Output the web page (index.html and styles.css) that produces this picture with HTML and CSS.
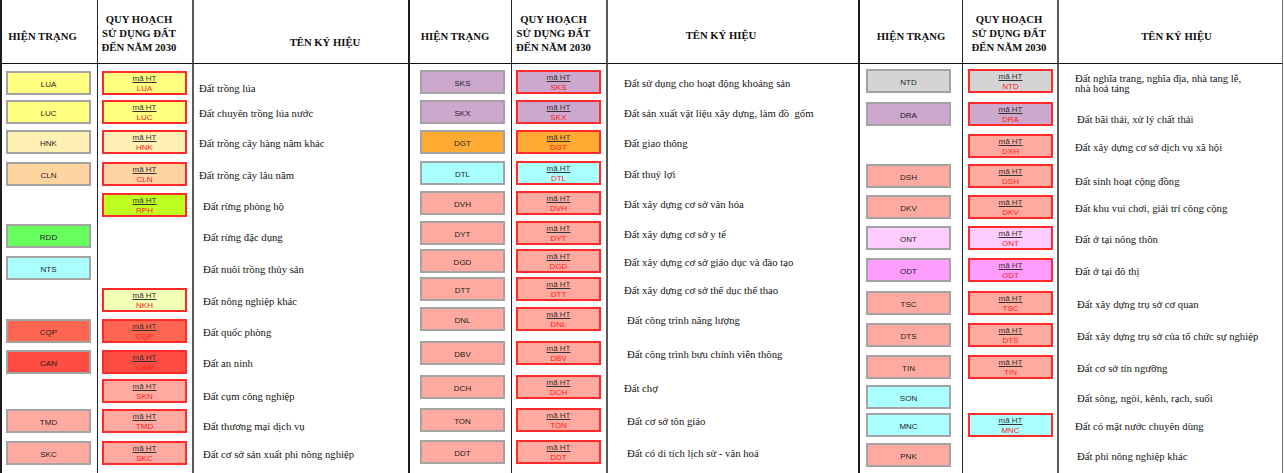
FILE: index.html
```html
<!DOCTYPE html>
<html lang="vi">
<head>
<meta charset="utf-8">
<title>Bảng ký hiệu quy hoạch sử dụng đất</title>
<link rel="stylesheet" href="styles.css">
</head>
<body>
<div class="sheet">

  <section class="group g1">
    <div class="cell ht head h-ht">HIỆN TRẠNG</div>
    <div class="cell qh head h-qh">QUY HOẠCH<br>SỬ DỤNG ĐẤT<br>ĐẾN NĂM 2030</div>
    <div class="cell nm head h-nm">TÊN KÝ HIỆU</div>

    <div class="cell ht"><div class="chip c-lua">LUA</div></div>
    <div class="cell qh"><div class="chip red c-lua"><u>mã HT</u><span>LUA</span></div></div>
    <div class="cell nm"><p class="low">Đất trồng lúa</p></div>

    <div class="cell ht"><div class="chip c-lua">LUC</div></div>
    <div class="cell qh"><div class="chip red c-lua"><u>mã HT</u><span>LUC</span></div></div>
    <div class="cell nm"><p>Đất chuyên trồng lúa nước</p></div>

    <div class="cell ht"><div class="chip c-hnk">HNK</div></div>
    <div class="cell qh"><div class="chip red c-hnk"><u>mã HT</u><span>HNK</span></div></div>
    <div class="cell nm"><p>Đất trồng cây hàng năm khác</p></div>

    <div class="cell ht"><div class="chip c-cln">CLN</div></div>
    <div class="cell qh"><div class="chip red c-cln"><u>mã HT</u><span>CLN</span></div></div>
    <div class="cell nm"><p>Đất trồng cây lâu năm</p></div>

    <div class="cell ht"></div>
    <div class="cell qh"><div class="chip red c-rph"><u>mã HT</u><span>RPH</span></div></div>
    <div class="cell nm"><p class="in">Đất rừng phòng hộ</p></div>

    <div class="cell ht"><div class="chip c-rdd">RDD</div></div>
    <div class="cell qh"></div>
    <div class="cell nm"><p class="in">Đất rừng đặc dụng</p></div>

    <div class="cell ht"><div class="chip c-cyan">NTS</div></div>
    <div class="cell qh"></div>
    <div class="cell nm"><p class="in">Đất nuôi trồng thủy sản</p></div>

    <div class="cell ht"></div>
    <div class="cell qh"><div class="chip red c-nkh"><u>mã HT</u><span>NKH</span></div></div>
    <div class="cell nm"><p class="in">Đất nông nghiệp khác</p></div>

    <div class="cell ht"><div class="chip c-cqp">CQP</div></div>
    <div class="cell qh"><div class="chip red c-cqp"><u>mã HT</u><span>CQP</span></div></div>
    <div class="cell nm"><p class="in">Đất quốc phòng</p></div>

    <div class="cell ht"><div class="chip c-can">CAN</div></div>
    <div class="cell qh"><div class="chip red c-can"><u>mã HT</u><span>CAN</span></div></div>
    <div class="cell nm"><p class="in">Đất an ninh</p></div>

    <div class="cell ht"></div>
    <div class="cell qh"><div class="chip red c-sal"><u>mã HT</u><span>SKN</span></div></div>
    <div class="cell nm"><p class="in low">Đất cụm công nghiệp</p></div>

    <div class="cell ht"><div class="chip c-sal">TMD</div></div>
    <div class="cell qh"><div class="chip red c-sal"><u>mã HT</u><span>TMD</span></div></div>
    <div class="cell nm"><p class="in low">Đất thương mại dịch vụ</p></div>

    <div class="cell ht"><div class="chip c-sal">SKC</div></div>
    <div class="cell qh"><div class="chip red c-sal"><u>mã HT</u><span>SKC</span></div></div>
    <div class="cell nm"><p class="in">Đất cơ sở sản xuất phi nông nghiệp</p></div>

    <div class="cell ht"></div><div class="cell qh"></div><div class="cell nm"></div>
  </section>

  <section class="group g2">
    <div class="cell ht head h-ht">HIỆN TRẠNG</div>
    <div class="cell qh head h-qh">QUY HOẠCH<br>SỬ DỤNG ĐẤT<br>ĐẾN NĂM 2030</div>
    <div class="cell nm head h-nm">TÊN KÝ HIỆU</div>

    <div class="cell ht"><div class="chip c-lil">SKS</div></div>
    <div class="cell qh"><div class="chip red c-lil"><u>mã HT</u><span>SKS</span></div></div>
    <div class="cell nm"><p>Đất sử dụng cho hoạt động khoáng sản</p></div>

    <div class="cell ht"><div class="chip c-lil">SKX</div></div>
    <div class="cell qh"><div class="chip red c-lil"><u>mã HT</u><span>SKX</span></div></div>
    <div class="cell nm"><p>Đất sản xuất vật liệu xây dựng, làm đồ&nbsp; gốm</p></div>

    <div class="cell ht"><div class="chip c-dgt">DGT</div></div>
    <div class="cell qh"><div class="chip red c-dgt"><u>mã HT</u><span>DGT</span></div></div>
    <div class="cell nm"><p>Đất giao thông</p></div>

    <div class="cell ht"><div class="chip c-cyan">DTL</div></div>
    <div class="cell qh"><div class="chip red c-cyan"><u>mã HT</u><span>DTL</span></div></div>
    <div class="cell nm"><p>Đất thuỷ lợi</p></div>

    <div class="cell ht"><div class="chip c-sal">DVH</div></div>
    <div class="cell qh"><div class="chip red c-sal"><u>mã HT</u><span>DVH</span></div></div>
    <div class="cell nm"><p>Đất xây dựng cơ sở văn hóa</p></div>

    <div class="cell ht"><div class="chip c-sal">DYT</div></div>
    <div class="cell qh"><div class="chip red c-sal"><u>mã HT</u><span>DYT</span></div></div>
    <div class="cell nm"><p>Đất xây dựng cơ sở y tế</p></div>

    <div class="cell ht"><div class="chip c-sal">DGD</div></div>
    <div class="cell qh"><div class="chip red c-sal"><u>mã HT</u><span>DGD</span></div></div>
    <div class="cell nm"><p>Đất xây dựng cơ sở giáo dục và đào tạo</p></div>

    <div class="cell ht"><div class="chip c-sal">DTT</div></div>
    <div class="cell qh"><div class="chip red c-sal"><u>mã HT</u><span>DTT</span></div></div>
    <div class="cell nm"><p>Đất xây dựng cơ sở thể dục thể thao</p></div>

    <div class="cell ht"><div class="chip c-sal">DNL</div></div>
    <div class="cell qh"><div class="chip red c-sal"><u>mã HT</u><span>DNL</span></div></div>
    <div class="cell nm"><p class="in">Đất công trình năng lượng</p></div>

    <div class="cell ht"><div class="chip c-sal">DBV</div></div>
    <div class="cell qh"><div class="chip red c-sal"><u>mã HT</u><span>DBV</span></div></div>
    <div class="cell nm"><p class="in">Đất công trình bưu chính viễn thông</p></div>

    <div class="cell ht"><div class="chip c-sal">DCH</div></div>
    <div class="cell qh"><div class="chip red c-sal"><u>mã HT</u><span>DCH</span></div></div>
    <div class="cell nm"><p>Đất chợ</p></div>

    <div class="cell ht"><div class="chip c-sal">TON</div></div>
    <div class="cell qh"><div class="chip red c-sal"><u>mã HT</u><span>TON</span></div></div>
    <div class="cell nm"><p class="in">Đất cơ sở tôn giáo</p></div>

    <div class="cell ht"><div class="chip c-sal">DDT</div></div>
    <div class="cell qh"><div class="chip red c-sal"><u>mã HT</u><span>DDT</span></div></div>
    <div class="cell nm"><p class="in">Đất có di tích lịch sử - văn hoá</p></div>

    <div class="cell ht"></div><div class="cell qh"></div><div class="cell nm"></div>
  </section>

  <section class="group g3">
    <div class="cell ht head h-ht">HIỆN TRẠNG</div>
    <div class="cell qh head h-qh">QUY HOẠCH<br>SỬ DỤNG ĐẤT<br>ĐẾN NĂM 2030</div>
    <div class="cell nm head h-nm">TÊN KÝ HIỆU</div>

    <div class="cell ht"><div class="chip c-grey">NTD</div></div>
    <div class="cell qh"><div class="chip red c-grey"><u>mã HT</u><span>NTD</span></div></div>
    <div class="cell nm"><p class="two">Đất nghĩa trang, nghĩa địa, nhà tang lễ,<br>nhà hoả táng</p></div>

    <div class="cell ht"><div class="chip c-lil">DRA</div></div>
    <div class="cell qh"><div class="chip red c-lil"><u>mã HT</u><span>DRA</span></div></div>
    <div class="cell nm"><p class="in low">Đất bãi thải, xử lý chất thải</p></div>

    <div class="cell ht"></div>
    <div class="cell qh"><div class="chip red c-sal"><u>mã HT</u><span>DXH</span></div></div>
    <div class="cell nm"><p>Đất xây dựng cơ sở dịch vụ xã hội</p></div>

    <div class="cell ht"><div class="chip c-sal">DSH</div></div>
    <div class="cell qh"><div class="chip red c-sal"><u>mã HT</u><span>DSH</span></div></div>
    <div class="cell nm"><p class="low">Đất sinh hoạt cộng đồng</p></div>

    <div class="cell ht"><div class="chip c-sal">DKV</div></div>
    <div class="cell qh"><div class="chip red c-sal"><u>mã HT</u><span>DKV</span></div></div>
    <div class="cell nm"><p>Đất khu vui chơi, giải trí công cộng</p></div>

    <div class="cell ht"><div class="chip c-ont">ONT</div></div>
    <div class="cell qh"><div class="chip red c-ont"><u>mã HT</u><span>ONT</span></div></div>
    <div class="cell nm"><p>Đất ở tại nông thôn</p></div>

    <div class="cell ht"><div class="chip c-odt">ODT</div></div>
    <div class="cell qh"><div class="chip red c-odt"><u>mã HT</u><span>ODT</span></div></div>
    <div class="cell nm"><p>Đất ở tại đô thị</p></div>

    <div class="cell ht"><div class="chip c-sal">TSC</div></div>
    <div class="cell qh"><div class="chip red c-sal"><u>mã HT</u><span>TSC</span></div></div>
    <div class="cell nm"><p class="in">Đất xây dựng trụ sở cơ quan</p></div>

    <div class="cell ht"><div class="chip c-sal">DTS</div></div>
    <div class="cell qh"><div class="chip red c-sal"><u>mã HT</u><span>DTS</span></div></div>
    <div class="cell nm"><p class="in">Đất xây dựng trụ sở của tổ chức sự nghiệp</p></div>

    <div class="cell ht"><div class="chip c-sal">TIN</div></div>
    <div class="cell qh"><div class="chip red c-sal"><u>mã HT</u><span>TIN</span></div></div>
    <div class="cell nm"><p class="in">Đất cơ sở tín ngưỡng</p></div>

    <div class="cell ht"><div class="chip c-cyan">SON</div></div>
    <div class="cell qh"></div>
    <div class="cell nm"><p class="in">Đất sông, ngòi, kênh, rạch, suối</p></div>

    <div class="cell ht"><div class="chip c-cyan">MNC</div></div>
    <div class="cell qh"><div class="chip red c-cyan"><u>mã HT</u><span>MNC</span></div></div>
    <div class="cell nm"><p>Đất có mặt nước chuyên dùng</p></div>

    <div class="cell ht"><div class="chip c-sal">PNK</div></div>
    <div class="cell qh"></div>
    <div class="cell nm"><p class="in">Đất phi nông nghiệp khác</p></div>

    <div class="cell ht"></div><div class="cell qh"></div><div class="cell nm"></div>
  </section>

</div>
</body>
</html>
```

FILE: styles.css
```css
html, body {
  margin: 0;
  padding: 0;
  background: #ffffff;
}

.sheet {
  display: flex;
  width: 1284px;
  height: 473px;
  overflow: hidden;
  font-family: "Liberation Serif", "Times New Roman", serif;
  color: #161616;
}

.group {
  display: grid;
  height: 473px;
  box-sizing: border-box;
  border-left: 2px solid #1c1c1c;
}

.g1 {
  width: 408px;
  grid-template-columns: 96px 96px 214px;
  grid-template-rows: 64px 31px 29px 30px 32px 31px 31px 32px 32px 31px 31px 29px 30px 32px 1fr;
}

.g2 {
  width: 450px;
  grid-template-columns: 102px 96px 250px;
  grid-template-rows: 64px 30px 30px 30px 31px 30px 30px 28px 28px 30px 34px 34px 33px 32px 1fr;
}

.g3 {
  width: 425px;
  border-right: 1px solid #6a6a6a;
  grid-template-columns: 103px 96px 223px;
  grid-template-rows: 64px 29px 33px 32px 30px 31px 31px 32px 33px 32px 32px 30px 28px 30px 1fr;
}

.cell {
  display: flex;
  align-items: flex-end;
  box-sizing: border-box;
  min-width: 0;
}

.ht {
  border-right: 1px solid #262626;
}

.qh {
  border-right: 2px solid #5a5a5a;
}

/* header */
.head {
  align-items: center;
  justify-content: center;
  text-align: center;
  border-bottom: 1px solid #111111;
  font-weight: bold;
  font-size: 10.7px;
  line-height: 14px;
  color: #111111;
}

.h-ht { padding-top: 8px; }
.h-qh { padding-top: 3px; }

.g1 .h-ht { padding-right: 14px; }
.g2 .h-ht { padding-right: 11px; }
.g1 .h-qh { padding-right: 12px; }
.g2 .h-qh { padding-right: 11px; }
.g3 .h-qh { padding-right: 2px; }

.g1 .h-nm { padding-top: 21px; padding-left: 48px; }
.g2 .h-nm { padding-top: 7px; padding-right: 24px; }
.g3 .h-nm { padding-top: 9px; padding-left: 12px; }

/* colour chips */
.chip {
  width: 85px;
  height: 24px;
  box-sizing: border-box;
  border: 2px solid #a3a3a3;
  display: flex;
  flex-direction: column;
  align-items: center;
  justify-content: center;
  padding-top: 3px;
  font-family: "Liberation Sans", Arial, sans-serif;
  font-size: 8px;
  line-height: 10px;
  color: #1e1e1e;
}

.chip.red {
  border: 2px solid #ff2b2b;
  padding-top: 1px;
}

.chip u {
  color: #333333;
  text-decoration: underline;
}

.chip span {
  color: #ff1a1a;
}

.g1 .ht .chip { margin-left: 4px; }
.g1 .qh .chip { margin-left: 4px; }
.g2 .ht .chip { margin-left: 10px; }
.g2 .qh .chip { margin-left: 4px; }
.g3 .ht .chip { margin-left: 6px; }
.g3 .qh .chip { margin-left: 5px; }

.c-lua { background: #ffff80; }
.c-hnk { background: #fff1b4; }
.c-cln { background: #ffd4a1; }
.c-rph { background: #c0ff22; }
.c-rdd { background: #66ff5e; }
.c-cyan { background: #aaffff; }
.c-nkh { background: #f3ffb5; }
.c-cqp { background: #ff6652; }
.c-can { background: #ff4d43; }
.c-sal { background: #ffaaa0; }
.c-lil { background: #cda8cd; }
.c-dgt { background: #ffaa33; }
.c-grey { background: #d4d4d4; }
.c-ont { background: #ffccff; }
.c-odt { background: #ff9dff; }

/* names */
.nm p {
  margin: 0;
  height: 24px;
  box-sizing: border-box;
  padding-top: 2px;
  display: flex;
  align-items: center;
  font-size: 10.7px;
  line-height: 10px;
  white-space: nowrap;
  color: #141414;
}

.g1 .nm p { padding-left: 5px; }
.g2 .nm p { padding-left: 16px; }
.g3 .nm p { padding-left: 16px; }

.g1 .nm p.in { padding-left: 9px; }
.g2 .nm p.in { padding-left: 19px; }
.g3 .nm p.in { padding-left: 18px; }

.nm p.low { padding-top: 10px; }
.nm p.two { padding-top: 3px; }
```
